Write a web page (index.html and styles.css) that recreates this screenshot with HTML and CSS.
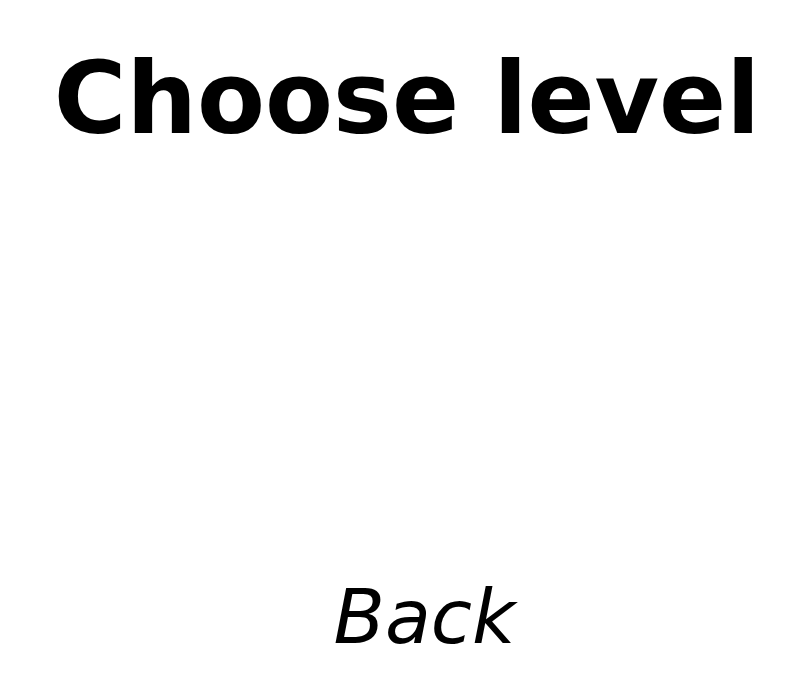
FILE: index.html
```html
<!DOCTYPE html>
<html>
<head>
<meta charset="utf-8">
<link rel="stylesheet" href="styles.css">
</head>
<body>
<div class="screen">
  <h1 class="title">Choose level</h1>
  <div class="levels"></div>
  <a class="back">Back</a>
</div>
</body>
</html>
```
FILE: styles.css
```css
html, body {
  margin: 0;
  padding: 0;
  background: #ffffff;
}
.screen {
  width: 800px;
  height: 700px;
  display: flex;
  flex-direction: column;
  align-items: center;
  font-family: "DejaVu Sans", sans-serif;
  color: #000;
}
.title {
  margin: 0 0 0 14px;
  padding-top: 40px;
  font-size: 99px;
  font-weight: bold;
  line-height: 1.2;
  text-align: center;
}
.levels {
  flex: 1;
}
.back {
  margin-left: 49px;
  font-size: 75px;
  font-style: italic;
  line-height: 1.2;
  padding-bottom: 38px;
}
```
